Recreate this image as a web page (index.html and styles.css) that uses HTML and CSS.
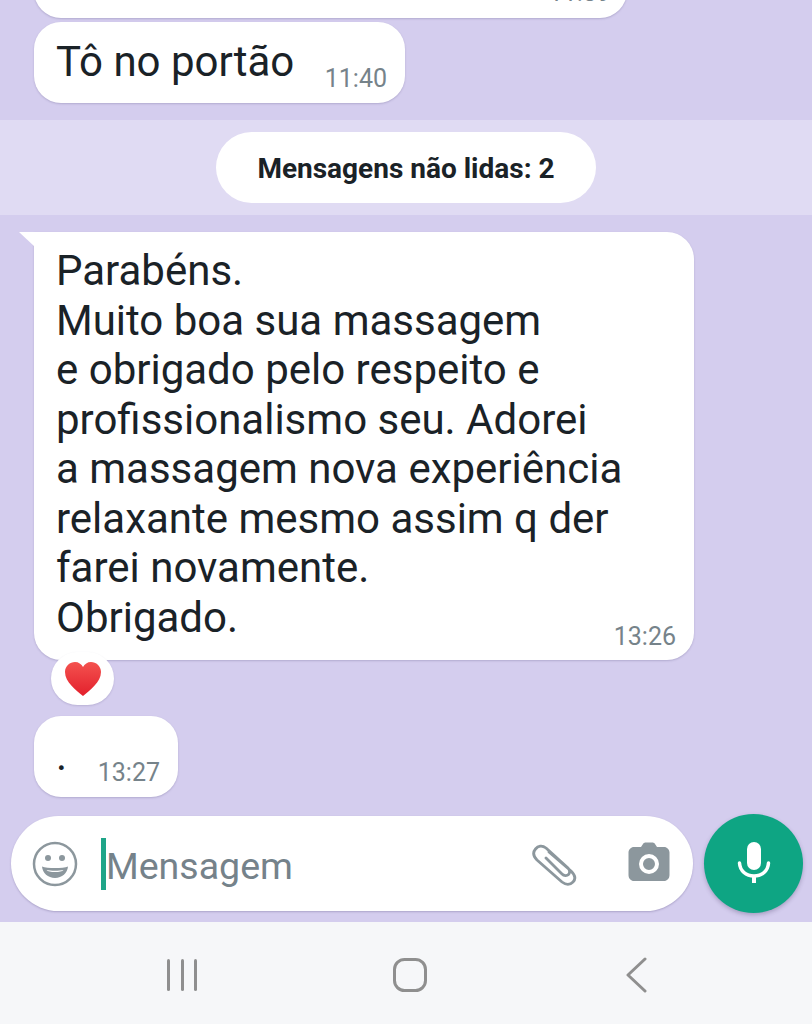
FILE: index.html
```html
<!DOCTYPE html>
<html lang="pt-BR">
<head>
    <meta charset="UTF-8">
    <meta name="viewport" content="width=device-width, initial-scale=1.0">
    <title>Conversa</title>
    <link rel="stylesheet" href="styles.css">
</head>
<body>
<div class="chat">
    <div class="bubble bubble-top">
        <span class="time time-top">11:39</span>
    </div>
    <div class="bubble bubble-short">
        <span class="msg">Tô no portão</span>
        <span class="time time-short">11:40</span>
    </div>

    <div class="unread">
        <div class="unread-pill">Mensagens não lidas: 2</div>
    </div>

    <div class="bubble bubble-long">
        <svg class="tail" width="16" height="16" viewBox="0 0 16 16"><path d="M0 0H16V15Z" fill="#fff"/></svg>
        <div class="msg">Parabéns.<br>Muito boa sua massagem<br>e obrigado pelo respeito e<br>profissionalismo seu. Adorei<br>a massagem nova experiência<br>relaxante mesmo assim q der<br>farei novamente.<br>Obrigado.</div>
        <span class="time time-long">13:26</span>
        <div class="reaction">
            <svg width="38" height="36" viewBox="0 0 38 36"><defs><linearGradient id="heart" x1="0" y1="0" x2="0" y2="1"><stop offset="0" stop-color="#f4524f"/><stop offset="1" stop-color="#e3202c"/></linearGradient></defs><path d="M19 35C12 29 1 21 1 11 1 5 6 1 11 1c3.500 0 6.500 2 8 5 1.500-3 4.500-5 8-5 5 0 10 4 10 10 0 10-11 18-18 24Z" fill="url(#heart)"/></svg>
        </div>
    </div>

    <div class="bubble bubble-dot">
        <span class="msg">.</span>
        <span class="time time-dot">13:27</span>
    </div>

    <div class="input-row">
        <div class="composer">
            <svg class="icon-emoji" width="46" height="46" viewBox="0 0 46 46" fill="none">
                <circle cx="23" cy="23" r="21" stroke="#8c979d" stroke-width="2.500"/>
                <circle cx="16" cy="17" r="3" fill="#8c979d"/>
                <circle cx="30" cy="17" r="3" fill="#8c979d"/>
                <path d="M10 25.500C15 27.500 31 27.500 36 25.500 35.500 32 30 37 23 37S10.500 32 10 25.500Z" fill="#8c979d"/>
                <path d="M14.500 29C19 30 27 30 31.500 29 30.500 30.500 27 31 23 31S15.500 30.500 14.500 29Z" fill="#fff"/>
            </svg>
            <span class="caret"></span>
            <span class="placeholder">Mensagem</span>
            <svg class="icon-clip" width="48" height="44" viewBox="0 0 48 44" fill="none" stroke="#8c979d" stroke-width="2.800" stroke-linecap="round" stroke-linejoin="round">
                <path d="M17 9 39 28C43 32 44 36 41 39 38 42 34 42 30 39L5 17C1 13 1 9 3.500 6 6 3 10 2 14 5L36 25C38 27 38 30 36.500 31.500 35 33 32 33 30 31L14 15"/>
            </svg>
            <svg class="icon-camera" width="42" height="40" viewBox="0 0 42 40">
                <path fill-rule="evenodd" d="M13 5 15 2C15.500 1 16.500 0.500 18 0.500H24C25.500 0.500 26.500 1 27 2L29 5H36C39 5 41.500 7.500 41.500 10.500V33C41.500 36.500 39 39 36 39H6C3 39 0.500 36.500 0.500 33V10.500C0.500 7.500 3 5 6 5ZM21 12A10 10 0 1 0 21.010 32 10 10 0 1 0 21 12ZM21 16A6 6 0 1 1 20.990 28 6 6 0 1 1 21 16Z" fill="#8c979d"/>
            </svg>
        </div>
        <div class="mic">
            <svg width="34" height="44" viewBox="0 0 34 44" fill="none">
                <rect x="10" y="0" width="14" height="28" rx="7" fill="#fff"/>
                <path d="M2.500 21C3 29 9 34 17 34S31 29 31.500 21" stroke="#fff" stroke-width="3.500" stroke-linecap="round"/>
                <path d="M17 33V41" stroke="#fff" stroke-width="4"/>
            </svg>
        </div>
    </div>
</div>

<div class="navbar">
    <svg class="nav-icon" width="34" height="32" viewBox="0 0 34 32" fill="#8f8f8f">
        <rect x="1" y="0" width="3" height="32" rx="1.500"/>
        <rect x="15" y="0" width="3" height="32" rx="1.500"/>
        <rect x="28" y="0" width="3" height="32" rx="1.500"/>
    </svg>
    <svg class="nav-icon nav-home" width="34" height="34" viewBox="0 0 34 34" fill="none">
        <rect x="1.500" y="1.500" width="31" height="31" rx="10" stroke="#8f8f8f" stroke-width="3"/>
    </svg>
    <svg class="nav-icon" width="22" height="36" viewBox="0 0 22 36" fill="none">
        <path d="M20 2 3 18 20 34" stroke="#8f8f8f" stroke-width="3" stroke-linecap="round" stroke-linejoin="round"/>
    </svg>
</div>
</body>
</html>
```

FILE: styles.css
```css
* {
    box-sizing: border-box;
}

html, body {
    height: 100%;
}

body {
    margin: 0;
    width: 812px;
    height: 1024px;
    overflow: hidden;
    display: flex;
    flex-direction: column;
    font-family: Roboto, "Liberation Sans", sans-serif;
    color: #1a2227;
}

.chat {
    height: 922px;
    background-color: #d4cdee;
    overflow: hidden;
}

.bubble {
    position: relative;
    margin-left: 34px;
    background-color: #fff;
    border-radius: 27px;
    box-shadow: 0 1px 2px rgba(80, 70, 120, 0.25);
}

.msg {
    font-size: 42px;
    line-height: 49.500px;
}

.time {
    position: absolute;
    font-size: 25px;
    line-height: 30px;
    color: #76838a;
}

.bubble-top {
    width: 593px;
    height: 58px;
    margin-top: -40px;
}

.time-top {
    right: 16px;
    bottom: 10px;
}

.bubble-short {
    width: 371px;
    height: 81px;
    margin-top: 4px;
    padding: 15px 0 0 22px;
}

.time-short {
    right: 18px;
    bottom: 9px;
}

.unread {
    height: 95px;
    margin-top: 17px;
    padding-top: 12px;
    background-color: #e0dbf3;
    display: flex;
    justify-content: center;
}

.unread-pill {
    width: 380px;
    height: 71px;
    padding-top: 2px;
    border-radius: 36px;
    background-color: #fff;
    font-size: 28px;
    font-weight: 700;
    display: flex;
    align-items: center;
    justify-content: center;
}

.bubble-long {
    width: 660px;
    height: 428px;
    margin-top: 17px;
    padding: 14px 0 0 22px;
    border-top-left-radius: 0;
}

.tail {
    position: absolute;
    left: -15px;
    top: 0;
}

.time-long {
    right: 18px;
    bottom: 8px;
}

.reaction {
    position: absolute;
    left: 17px;
    top: 420px;
    width: 63px;
    height: 53px;
    border-radius: 27px;
    background-color: #fff;
    box-shadow: 0 1px 2px rgba(80, 70, 120, 0.2);
    display: flex;
    align-items: center;
    justify-content: center;
}

.bubble-dot {
    width: 144px;
    height: 81px;
    margin-top: 56px;
    padding: 15px 0 0 22px;
}

.time-dot {
    right: 18px;
    bottom: 9px;
}

.input-row {
    margin-top: 17px;
    padding: 0 9px 0 11px;
    display: flex;
    align-items: center;
    justify-content: space-between;
}

.composer {
    width: 682px;
    height: 95px;
    border-radius: 48px;
    background-color: #fff;
    box-shadow: 0 1px 2px rgba(80, 70, 120, 0.3);
    display: flex;
    align-items: center;
    padding-left: 21px;
}

.caret {
    width: 5px;
    height: 52px;
    margin-left: 23px;
    background-color: #1fa588;
}

.placeholder {
    flex: 1;
    margin-top: 4px;
    font-size: 37.500px;
    color: #75828a;
}

.icon-clip {
    margin-right: 48px;
    margin-top: 2px;
}

.icon-camera {
    margin-right: 23px;
    margin-bottom: 3px;
}

.mic {
    width: 99px;
    height: 99px;
    border-radius: 50%;
    background-color: #0ea583;
    box-shadow: 0 2px 4px rgba(60, 50, 90, 0.3);
    display: flex;
    align-items: center;
    justify-content: center;
}

.navbar {
    height: 102px;
    background-color: #f6f7f9;
    display: flex;
    align-items: center;
    padding: 0 165px 0 166px;
    justify-content: space-between;
}

.nav-icon {
    margin-top: 4px;
}

.nav-home {
    margin-right: 5px;
}
```
